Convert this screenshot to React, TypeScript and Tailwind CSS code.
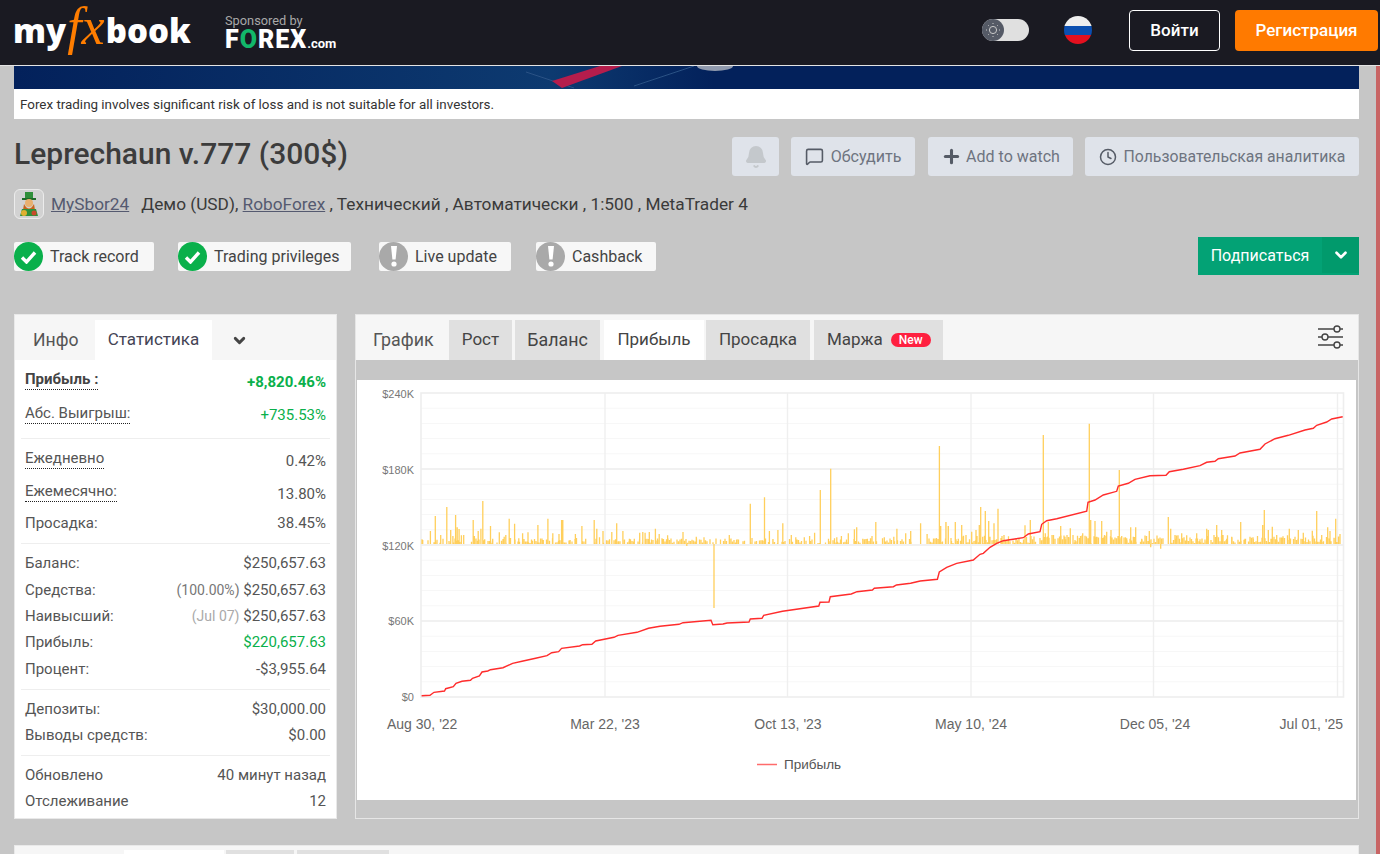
import React from 'react';
import { MessageSquare, Clock, ChevronDown, Plus, Bell } from 'lucide-react';

// points read off the reference, in page coordinates
const profit: [number, number][] = [
  [421.6,695.7],[430,695.3],[434,692.3],[444.5,691],[445.7,688.7],[453.3,686.7],[456,683.3],[462,681.3],[470.5,680.3],[472.5,678.3],[479.4,676],[482,672],[487.8,671],[490.5,669.7],[503,667.7],[512.6,663.3],[522,661.3],[535.6,658.3],[547,655.7],[551.7,652.7],[558.6,651.7],[561.6,648.3],[579.6,646],[582.7,644.7],[591.9,644.3],[595.7,641],[614,637.3],[618,635.3],[637,632.3],[648.5,628.3],[660,626.3],[679,624.3],[683,622.7],[711,620.3],[712.8,624.7],[723,624],[727,623],[749,622],[750.3,619],[762,618.3],[763.7,615.3],[782.5,611.3],[818.8,606],[820,602.3],[829,602],[830.3,596.7],[851.3,594],[857,591.7],[872.4,590],[874.3,588.3],[893.4,586.7],[896.5,585],[910.6,583.3],[920.2,581],[937.4,579.3],[939.3,572],[946.7,567.3],[956.7,563.3],[973.3,560],[980,554.3],[983.3,553.3],[990,547.3],[996.7,543.3],[1003.3,540.7],[1023.3,537.7],[1028.3,534],[1040,531.7],[1041.7,524.3],[1046.7,520.7],[1056.7,518.7],[1086.7,511.3],[1088,502.3],[1095,500],[1103.3,495],[1116.7,491.3],[1118.3,486],[1128.3,483.3],[1135,479.3],[1150,475.7],[1166,475.3],[1169.3,471.7],[1183.3,469.3],[1200,465.7],[1206.7,462.3],[1215,461.3],[1218.3,458.7],[1235,456],[1240,453],[1260,449.3],[1265,444],[1275,438.7],[1288.3,435.3],[1305,430],[1313.3,428.3],[1316.7,425.3],[1326.7,422],[1331.7,419],[1342.7,416.7],
];

const leftSpikes = [
  [190,690],[210,663],[223,618],[237,675],[243,686],[253,591],[263,660],[269,678],[276,615],[280,652],[285,657],[291,676],[297,675],[322,630],[325,678],[335,663],[342,656],[347,573],[352,688],[367,648],[373,686],[390,667],[403,680],[407,675],[416,626],[430,641],[441,685],[451,670],[465,667],[477,692],[491,645],[505,690],[517,626],[530,670],[546,672],[553,630],[556,630],[575,690],[589,672],[606,648],[616,686],[638,630],[645,656],[652,682],[661,663],[684,666],[697,640],[713,663],[730,686],[743,686],[757,668],[765,666],[771,668],[782,666],[798,656],[808,672],[818,688],[830,676],[870,666],[880,708],[905,680],[925,682],[980,686],[991,675],[1010,690],[1046,581],[1083,562],[1096,663],[1105,688],[1118,660],[1131,640],[1153,675],[1165,682],[1187,682],[1201,678],[1214,668],[1229,540],[1256,476],[1272,682],[1284,678],[1302,670],[1318,658],[1324,652],[1340,686],[1352,686],[1364,678],[1374,636],[1396,682],[1421,680],[1429,656],[1452,670],[1465,663],[1491,640],[1508,672],[1540,408],[1543,648],[1557,636],[1563,648],
];
const rightSpikes = [
  [2,648],[18,636],[25,648],[33,684],[46,636],[55,686],[65,645],[78,675],[95,665],[108,660],[118,645],[122,591],[128,680],[136,603],[146,633],[150,680],[162,640],[174,596],[186,678],[255,646],[271,630],[282,692],[310,375],[316,670],[325,636],[336,675],[345,686],[362,648],[375,680],[391,655],[405,690],[418,684],[428,670],[448,341],[452,630],[465,633],[470,680],[485,633],[492,680],[500,665],[513,660],[538,480],[545,678],[560,685],[572,652],[580,680],[587,652],[605,686],[628,663],[632,712],[662,716],[685,621],[692,656],[707,686],[725,670],[740,676],[750,686],[770,670],[780,688],[800,656],[805,660],[830,645],[845,660],[860,686],[875,680],[902,636],[915,686],[930,680],[940,686],[968,645],[973,600],[985,660],[997,650],[1010,675],[1025,684],[1048,656],[1065,680],[1075,660],[1090,668],[1117,662],[1130,603],[1145,675],[1163,652],[1170,663],[1187,626],[1200,672],
];

const baseY = 544;

function buildBars() {
  let d = '';
  leftSpikes.forEach(([zx, zy]) => {
    d += `M${(350 + zx / 2.613).toFixed(1)} ${baseY}V${(310 + zy / 3).toFixed(1)}`;
  });
  rightSpikes.forEach(([zx, zy]) => {
    d += `M${(940 + zx / 3).toFixed(1)} ${baseY}V${(310 + zy / 3).toFixed(1)}`;
  });
  d += `M714 ${baseY}V608`;
  // small bars along the base line
  let seed = 77;
  for (let x = 422; x < 1343; x += 1.5) {
    seed = (seed * 1103515245 + 12345) % 2147483648;
    const r = seed / 2147483648;
    const dense = x > 960 ? 0.85 : 0.6;
    seed = (seed * 1103515245 + 12345) % 2147483648;
    const h = 1 + (seed / 2147483648) * (x > 960 ? 8 : 5);
    if (r < dense) d += `M${x} ${baseY}V${(baseY - h).toFixed(1)}`;
  }
  return d;
}

const Chart = () => {
  const minor = [408.2, 423.4, 438.6, 453.8, 484.2, 499.4, 514.6, 529.8, 560.2, 575.4, 590.6, 605.8, 636.2, 651.4, 666.6, 681.8];
  const major = [469, 545, 621];
  const vert = [605, 787.5, 971, 1153.5, 1337.5];
  return (
    <svg viewBox="357 380 999 420" className="block w-[999px] h-[420px]" style={{ fontFamily: '"Liberation Sans", Arial, sans-serif' }}>
      {minor.map(y => <line key={y} x1="421" x2="1344" y1={y} y2={y} stroke="#f7f7f7" />)}
      {major.map(y => <line key={y} x1="421" x2="1344" y1={y} y2={y} stroke="#ececec" strokeWidth="1.3" />)}
      {vert.map(x => <line key={x} x1={x} x2={x} y1="393" y2="697" stroke="#efefef" strokeWidth="1.4" />)}
      <rect x="421" y="393" width="922.5" height="304" fill="none" stroke="#eeeeee" strokeWidth="1.6" />
      <path d={buildBars()} stroke="#ffcf5c" strokeWidth="1.3" fill="none" />
      <polyline points={profit.map(p => p.join(',')).join(' ')} fill="none" stroke="#ff2c2c" strokeWidth="1.4" />
      {[['$240K', 398], ['$180K', 474], ['$120K', 550], ['$60K', 625], ['$0', 701]].map(([t, y]) => (
        <text key={t} x="414" y={y} textAnchor="end" fontSize="11" fill="#777777">{t}</text>
      ))}
      <text x="387" y="729" fontSize="14" fill="#666666">Aug 30, '22</text>
      <text x="605" y="729" fontSize="14" fill="#666666" textAnchor="middle">Mar 22, '23</text>
      <text x="788" y="729" fontSize="14" fill="#666666" textAnchor="middle">Oct 13, '23</text>
      <text x="971" y="729" fontSize="14" fill="#666666" textAnchor="middle">May 10, '24</text>
      <text x="1155" y="729" fontSize="14" fill="#666666" textAnchor="middle">Dec 05, '24</text>
      <text x="1343" y="729" fontSize="14" fill="#666666" textAnchor="end">Jul 01, '25</text>
      <line x1="757" x2="777" y1="764.5" y2="764.5" stroke="#ff6b6b" strokeWidth="1.5" />
      <text x="784" y="769" fontSize="13.5" fill="#555555">Прибыль</text>
    </svg>
  );
};

const Avatar = () => (
  <div className="w-[30px] h-[30px] rounded-[6px] border border-[#ececec] bg-[#d2d2d2] flex items-center justify-center shrink-0">
    <svg width="24" height="26" viewBox="0 0 24 26">
      <rect x="8" y="1" width="8" height="7" fill="#2f8f3a" />
      <rect x="5" y="7" width="14" height="2" fill="#1f6b2a" />
      <circle cx="12" cy="12" r="4" fill="#e8b070" />
      <path d="M7 13 Q12 22 17 13 L18 19 Q12 24 6 19Z" fill="#c9651c" />
      <path d="M5 18 L19 18 L21 25 L3 25Z" fill="#2f8f3a" />
      <circle cx="7" cy="22" r="3" fill="#e0b030" />
      <circle cx="17" cy="22" r="2.5" fill="#c94a2a" />
    </svg>
  </div>
);

const CheckIcon = () => (
  <div className="w-[29px] h-[29px] rounded-full bg-[#0ab04b] flex items-center justify-center shrink-0">
    <svg width="17" height="14" viewBox="0 0 17 14"><path d="M2 7.5 L6.5 12 L15 2.5" fill="none" stroke="#ffffff" strokeWidth="3.4" /></svg>
  </div>
);

const WarnIcon = () => (
  <div className="w-[29px] h-[29px] rounded-full bg-[#a9a9a9] flex items-center justify-center shrink-0">
    <svg width="8" height="21" viewBox="0 0 8 21"><path d="M1 0 H7 L5.6 13.5 H2.4Z" fill="#ffffff" /><circle cx="4" cy="18" r="2.6" fill="#ffffff" /></svg>
  </div>
);

const badges = [
  { label: 'Track record', ok: true, width: 'w-[140px]', gap: 'mr-[24px]' },
  { label: 'Trading privileges', ok: true, width: 'w-[173px]', gap: 'mr-[28px]' },
  { label: 'Live update', ok: false, width: 'w-[132px]', gap: 'mr-[25px]' },
  { label: 'Cashback', ok: false, width: 'w-[120px]', gap: '' },
];

const chartTabs = [
  { label: 'Рост', cls: 'w-[63px] bg-[#e0e0e0] mr-[3px] ml-[15px]' },
  { label: 'Баланс', cls: 'w-[85px] bg-[#e0e0e0] mr-[4px] text-[17.8px]' },
  { label: 'Прибыль', cls: 'w-[100px] bg-white mr-[2px]' },
  { label: 'Просадка', cls: 'w-[104px] bg-[#e0e0e0] mr-[4px]' },
];

const Label = ({ children }: { children: React.ReactNode }) => (
  <span className="border-b border-dotted border-[#222222] leading-[17px] pb-[1px]">{children}</span>
);

const Row = ({ h, label, children, shift }: { h: string; label: React.ReactNode; children: React.ReactNode; shift?: string }) => (
  <div className={`${h} flex items-center justify-between`}>
    <span>{label}</span>
    <span className={shift}>{children}</span>
  </div>
);

const Divider = () => <div className="border-t border-[#eeeeee] -mx-[4px]" />;

const StatsPanel = () => (
  <div className="w-[323px] h-[505px] shrink-0 bg-white border border-[#e9e9e9]">
    <div className="h-[45px] bg-[#f6f6f6] pt-[5px] flex text-[17px] text-[#555555]">
      <div className="w-[80px] flex items-center pl-[18px] text-[17.6px]">Инфо</div>
      <div className="w-[117px] bg-white flex items-center justify-center text-[#445]">Статистика</div>
      <div className="w-[55px] flex items-center justify-center text-[#444444]"><ChevronDown size={17} strokeWidth={4} /></div>
    </div>
    <div className="px-[10px] pt-[2px] text-[15px] text-[#555555]">
      <Row h="h-[35px]" shift="mt-[6px]" label={<span className="border-b border-dotted border-[#222222] pb-[1px] font-bold text-[#444444]">Прибыль :</span>}>
        <span className="font-bold text-[#0ab04b]">+8,820.46%</span>
      </Row>
      <Row h="h-[33px]" shift="mt-[4px]" label={<Label>Абс. Выигрыш:</Label>}>
        <span className="text-[#0ab04b]">+735.53%</span>
      </Row>
      <div className="h-[8px]" />
      <Divider />
      <div className="h-[3px]" />
      <Row h="h-[33px]" shift="mt-[6px]" label={<Label>Ежедневно</Label>}>0.42%</Row>
      <Row h="h-[33px]" shift="mt-[6px]" label={<Label>Ежемесячно:</Label>}>13.80%</Row>
      <Row h="h-[30px]" label="Просадка:">38.45%</Row>
      <div className="h-[5px]" />
      <Divider />
      <div className="h-[6px]" />
      <Row h="h-[26px]" label="Баланс:">$250,657.63</Row>
      <Row h="h-[28px]" label="Средства:"><span className="text-[14px] text-[#777777]">(100.00%)</span> $250,657.63</Row>
      <Row h="h-[25px]" label="Наивысший:"><span className="text-[14px] text-[#aaaaaa]">(Jul 07)</span> $250,657.63</Row>
      <Row h="h-[26px]" label="Прибыль:"><span className="text-[#0ab04b]">$220,657.63</span></Row>
      <Row h="h-[28px]" label="Процент:">-$3,955.64</Row>
      <div className="h-[6px]" />
      <Divider />
      <div className="h-[6px]" />
      <Row h="h-[26px]" label="Депозиты:">$30,000.00</Row>
      <Row h="h-[26px]" label="Выводы средств:">$0.00</Row>
      <div className="h-[7px]" />
      <Divider />
      <div className="h-[6px]" />
      <Row h="h-[26px]" label="Обновлено">40 минут назад</Row>
      <Row h="h-[26px]" label="Отслеживание">12</Row>
    </div>
  </div>
);

const ChartPanel = () => (
  <div className="w-[1004px] h-[505px] shrink-0 border border-[#e6e6e6]">
    <div className="h-[45px] bg-[#f6f6f6] pt-[5px] flex text-[17px] text-[#444444]">
      <div className="w-[78px] pl-[17px] flex items-center text-[#555555] text-[17.8px]">График</div>
      {chartTabs.map(t => (
        <div key={t.label} className={`${t.cls} flex items-center justify-center`}>{t.label}</div>
      ))}
      <div className="w-[129px] bg-[#e0e0e0] flex items-center pl-[13px]">
        Маржа
        <span className="ml-[8px] w-[40px] h-[14px] rounded-full bg-[#ff2040] text-white text-[12px] font-medium leading-[14px] text-center">New</span>
      </div>
      <div className="flex-1 flex justify-end items-start pr-[14px] pt-[6px] -mt-[1px]">
        <svg width="27" height="24" viewBox="0 0 27 24" fill="none" stroke="#444444" strokeWidth="1.4">
          <path d="M1 4H17M23 4H26M1 12H5M11 12H26M1 20H17M23 20H26" />
          <circle cx="20" cy="4" r="3" />
          <circle cx="8" cy="12" r="3" />
          <circle cx="20" cy="20" r="3" />
        </svg>
      </div>
    </div>
    <div className="ml-[1px] mt-[20px] w-[999px] bg-white">
      <Chart />
    </div>
  </div>
);

const App = () => {
  return (
    <div className="w-[1380px] h-[854px] overflow-hidden bg-[#c6c6c6] flex flex-col" style={{ fontFamily: 'Roboto, "Noto Sans", sans-serif' }}>
      {/* Header */}
      <header className="h-[66px] shrink-0 bg-[#1a1a22] border-b border-[#e4e4e4] flex items-center pl-[13px] pr-[2px] pb-[5px]">
        <div className="w-[212px] flex items-center text-white text-[33px] font-extrabold leading-none" style={{ fontFamily: '"Open Sans", sans-serif' }}>
          <span>my</span>
          <span className="px-[1px] text-[#ff7d00] text-[52px] font-normal italic -mt-[6px]" style={{ fontFamily: '"Liberation Serif", serif' }}>fx</span>
          <span>book</span>
        </div>
        <div className="flex flex-col pt-[9px]">
          <span className="text-[12.8px] leading-[14px] text-[#a8a8a8]">Sponsored by</span>
          <span className="flex items-baseline text-white text-[25px] leading-[22px] tracking-[1px] mt-[1px]" style={{ fontWeight: 900 }}>
            F<span className="text-[#12b76a]">O</span>REX<span className="text-[13px] font-bold tracking-normal">.com</span>
          </span>
        </div>
        <div className="flex-1" />
        <div className="w-[47px] h-[22px] rounded-full bg-[#e0e0e0] flex items-center mr-[35px]">
          <div className="w-[22px] h-[22px] rounded-full bg-[#555a66] flex items-center justify-center">
            <svg width="16" height="16" viewBox="0 0 16 16" fill="none" stroke="#c9c9c9">
              <circle cx="8" cy="8" r="3.6" />
              <path d="M8 1V2M8 14V15M1 8H2M14 8H15M3 3L3.7 3.7M12.3 12.3L13 13M3 13L3.7 12.3M12.3 3.7L13 3" />
            </svg>
          </div>
        </div>
        <div className="w-[28px] h-[28px] rounded-full overflow-hidden flex flex-col mr-[37px]">
          <div className="h-[10px] bg-[#eeeeee]" />
          <div className="h-[9px] bg-[#0b4fb0]" />
          <div className="h-[9px] bg-[#e3101f]" />
        </div>
        <button className="w-[91px] h-[41px] rounded-[4px] border border-white text-white text-[17px] font-medium pt-[1px] mr-[15px]">Войти</button>
        <button className="w-[143px] h-[41px] rounded-[4px] bg-[#ff7a00] text-white text-[17px] font-medium pt-[1px]">Регистрация</button>
      </header>

      <div className="flex flex-1 min-h-0">
        <main className="w-[1376px] pl-[14px] pr-[17px]">
          {/* Banner */}
          <div className="h-[23px] bg-[#03215b] overflow-hidden">
            <svg width="1345" height="23" viewBox="0 0 1345 23" className="block">
              <defs>
                <linearGradient id="bn" x1="0" x2="1" y1="0" y2="0">
                  <stop offset="0" stopColor="#03215b" />
                  <stop offset="0.4" stopColor="#0d3a70" />
                  <stop offset="0.52" stopColor="#03215b" />
                  <stop offset="1" stopColor="#03215b" />
                </linearGradient>
              </defs>
              <rect width="1345" height="23" fill="url(#bn)" />
              <path d="M512 6 L560 22 M620 20 L680 0" stroke="#2a5285" fill="none" />
              <path d="M538 15 L586 0 L608 0 L548 22Z" fill="#b51d4c" />
              <ellipse cx="701" cy="0" rx="18" ry="5" fill="#8f99ad" />
            </svg>
          </div>
          <div className="h-[30px] bg-white flex items-center pl-[6px] text-[13.4px] text-[#333333] pt-[2px]">
            Forex trading involves significant risk of loss and is not suitable for all investors.
          </div>

          {/* Title and actions */}
          <div className="mt-[18px] h-[39px] flex items-start justify-between">
            <h1 className="text-[30px] leading-[34px] font-medium text-[#3c3c3c]">Leprechaun v.777 (300$)</h1>
            <div className="flex text-[16px] text-[#6e7480]">
              <div className="w-[47px] h-[39px] bg-[#dfe3ea] rounded-[3px] flex items-center justify-center mr-[12px]">
                <Bell size={24} fill="#c4c8cc" stroke="#c4c8cc" />
              </div>
              <div className="w-[124px] h-[39px] bg-[#dfe3ea] rounded-[3px] flex items-center justify-center gap-[7px] mr-[13px]">
                <MessageSquare size={19} stroke="#555b66" />Обсудить
              </div>
              <div className="w-[145px] h-[39px] bg-[#dfe3ea] rounded-[3px] flex items-center justify-center gap-[4px] mr-[12px]">
                <Plus size={21} stroke="#555b66" strokeWidth={3.5} />Add to watch
              </div>
              <div className="w-[274px] h-[39px] bg-[#dfe3ea] rounded-[3px] flex items-center justify-center gap-[7px] text-[15.8px]">
                <Clock size={18} stroke="#555b66" />Пользовательская аналитика
              </div>
            </div>
          </div>

          {/* Account line */}
          <div className="mt-[13px] h-[30px] flex items-center text-[17.25px] text-[#3a3a3a]">
            <Avatar />
            <div className="flex items-center pt-[2px]">
              <a className="ml-[7px] underline text-[#555a70]">MySbor24</a>
              <span className="ml-[12px]">Демо (USD),&nbsp;</span>
              <a className="underline text-[#555a70]">RoboForex</a>
              <span>&nbsp;, Технический , Автоматически , 1:500 , MetaTrader 4</span>
            </div>
          </div>

          {/* Badges */}
          <div className="mt-[18px] h-[38px] flex items-start justify-between">
            <div className="flex pt-[5px]">
              {badges.map(b => (
                <div key={b.label} className={`${b.width} ${b.gap} h-[29px] bg-[#f7f7f7] rounded-[2px] flex items-center text-[16px] text-[#444444]`}>
                  {b.ok ? <CheckIcon /> : <WarnIcon />}
                  <span className="ml-[7px]">{b.label}</span>
                </div>
              ))}
            </div>
            <div className="w-[161px] h-[38px] bg-[#03a275] flex text-white text-[16px]">
              <div className="flex-1 flex items-center justify-center">Подписаться</div>
              <div className="w-[37px] h-[36px] bg-[#019a6c] flex items-center justify-center"><ChevronDown size={18} strokeWidth={3.5} /></div>
            </div>
          </div>

          {/* Panels */}
          <div className="mt-[39px] flex justify-between">
            <StatsPanel />
            <ChartPanel />
          </div>

          {/* Next panel, cut off by the window */}
          <div className="mt-[26px] h-[20px] bg-[#f6f6f6] border border-[#e9e9e9] pt-[4px] pl-[109px] flex">
            <div className="w-[100px] h-[16px] bg-white mr-[2px]" />
            <div className="w-[68px] h-[16px] bg-[#e0e0e0] mr-[3px]" />
            <div className="w-[92px] h-[16px] bg-[#e0e0e0]" />
          </div>
        </main>
        <div className="w-[4px] bg-[#c86464]" />
      </div>
    </div>
  );
};

export default App;
